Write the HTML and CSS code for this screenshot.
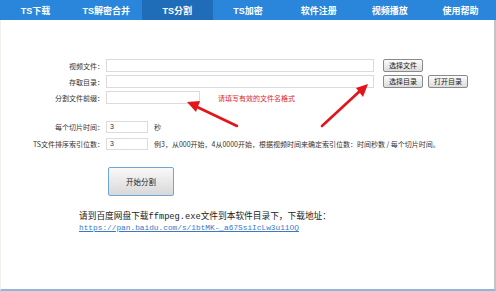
FILE: index.html
```html
<!DOCTYPE html>
<html lang="zh-CN">
<head>
<meta charset="utf-8">
<title>TS分割</title>
<link rel="stylesheet" href="styles.css">
</head>
<body>
<nav class="tabs">
  <a class="tab">TS下载</a>
  <a class="tab">TS解密合并</a>
  <a class="tab active">TS分割</a>
  <a class="tab">TS加密</a>
  <a class="tab">软件注册</a>
  <a class="tab">视频播放</a>
  <a class="tab">使用帮助</a>
</nav>
<main class="panel">
  <div class="rows">
    <div class="row">
      <label class="lbl">视频文件：</label>
      <input class="field wide" type="text">
      <button class="btn">选择文件</button>
    </div>
    <div class="row">
      <label class="lbl">存取目录：</label>
      <input class="field wide" type="text">
      <button class="btn">选择目录</button>
      <button class="btn">打开目录</button>
    </div>
    <div class="row">
      <label class="lbl">分割文件前缀：</label>
      <input class="field mid" type="text">
      <span class="hint">请填写有效的文件名格式</span>
    </div>
  </div>
  <div class="rows second">
    <div class="row">
      <label class="lbl">每个切片时间：</label>
      <input class="field short" type="text" value="3">
      <span class="note">秒</span>
    </div>
    <div class="row">
      <label class="lbl">TS文件排序索引位数：</label>
      <input class="field short" type="text" value="3">
      <span class="note">例3，从000开始，4从0000开始，根据视频时间来确定索引位数：时间秒数 / 每个切片时间。</span>
    </div>
  </div>
  <div class="start-wrap">
    <button class="start">开始分割</button>
  </div>
  <div class="download">
    <p class="dl-text">请到百度网盘下载<span class="mono">ffmpeg.exe</span>文件到本软件目录下，下载地址：</p>
    <a class="dl-link">https://pan.baidu.com/s/1btMK-_a67SsiIcLw3u11OQ</a>
  </div>
  <svg class="arrows" width="496" height="270" viewBox="0 20 496 270">
    <g stroke="#e3151b" stroke-width="2.6" stroke-linecap="round" fill="none">
      <line x1="236" y1="126" x2="194" y2="106"/>
      <line x1="321" y1="126" x2="360" y2="90"/>
    </g>
    <g fill="#e3151b">
      <polygon points="186,102 199,101 195,112"/>
      <polygon points="367,84 362,97 355,88"/>
    </g>
  </svg>
</main>
</body>
</html>
```
FILE: styles.css
```css
html, body {
  margin: 0;
  padding: 0;
  background: #ffffff;
}
body {
  width: 496px;
  height: 291px;
  overflow: hidden;
  font-family: "Noto Sans CJK SC", "Liberation Sans", sans-serif;
  color: #333;
}
.tabs {
  display: flex;
  height: 20px;
  background: #2a86da;
}
.tab {
  flex: 1;
  display: flex;
  align-items: center;
  justify-content: center;
  color: #fff;
  font-weight: bold;
  font-size: 9px;
  font-family: "Liberation Sans", "Noto Sans CJK SC", sans-serif;
}
.tab.active {
  background: #1f6db9;
}
.panel {
  position: relative;
  box-sizing: border-box;
  height: 271px;
  padding-top: 39px;
  border-left: 1px solid #f0f0ec;
  border-right: 2px solid #c4c4c4;
  border-bottom: 2px solid #8db8dc;
}
.rows {
  display: flex;
  flex-direction: column;
  gap: 3px;
}
.rows.second {
  margin-top: 16px;
  gap: 4px;
}
.row {
  display: flex;
  align-items: center;
  height: 13px;
  font-size: 7px;
}
.lbl {
  width: 103px;
  margin-right: 2px;
  text-align: right;
  color: #333;
}
.field {
  box-sizing: border-box;
  height: 13px;
  margin: 0;
  padding: 0 3px;
  border: 1px solid #dcdcdc;
  background: #fff;
  font-size: 7px;
  font-family: "Liberation Sans", sans-serif;
  color: #333;
}
.second .field {
  height: 12px;
}
.wide { width: 268px; }
.mid { width: 94px; }
.short { width: 42px; }
.btn {
  box-sizing: border-box;
  height: 13px;
  margin: 0 0 0 9px;
  padding: 0 5px;
  border: 1px solid #8a8a8a;
  border-radius: 2px;
  background: linear-gradient(#fbfbfb, #dcdcdc);
  font-size: 7px;
  font-family: "Noto Sans CJK SC", sans-serif;
  color: #222;
  line-height: 1;
}
.btn + .btn {
  margin-left: 5px;
}
.hint {
  margin-left: 18px;
  color: #d9262b;
}
.note {
  margin-left: 6px;
  color: #333;
}
.start-wrap {
  padding-left: 107px;
  margin-top: 16px;
}
.start {
  box-sizing: border-box;
  width: 66px;
  height: 29px;
  margin: 0;
  border: 1px solid #6fa6d6;
  border-radius: 2px;
  background: linear-gradient(#f9f9f9, #d8d8d8);
  font-size: 7.5px;
  font-family: "Noto Sans CJK SC", sans-serif;
  color: #222;
}
.download {
  padding-left: 78px;
  margin-top: 14px;
}
.dl-text {
  margin: 0;
  font-size: 8.7px;
  line-height: 12px;
  color: #222;
}
.mono {
  font-family: "Liberation Mono", monospace;
}
.dl-link {
  display: block;
  font-family: "Liberation Mono", monospace;
  font-size: 7.8px;
  line-height: 11px;
  color: #3a7ac2;
  text-decoration: underline;
}
.arrows {
  position: absolute;
  left: 0;
  top: 0;
  pointer-events: none;
}
```
